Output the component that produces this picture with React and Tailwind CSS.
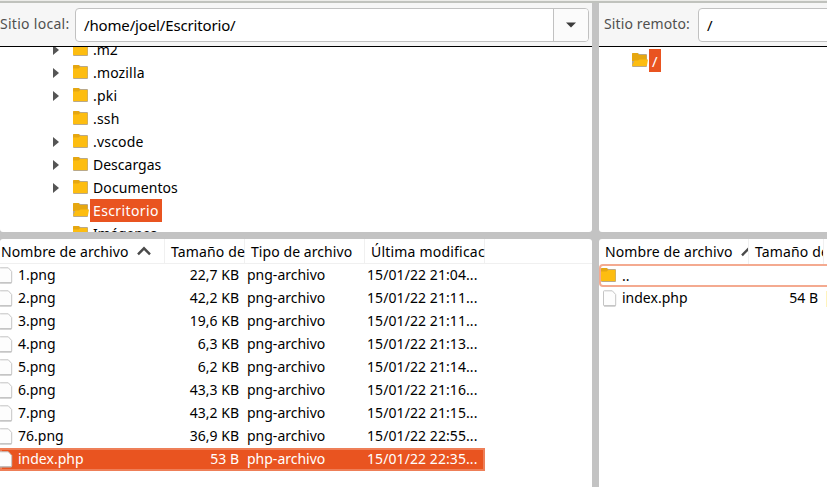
import React from "react";

const tree = [
  { name: ".m2", arrow: true },
  { name: ".mozilla", arrow: true, track: "tracking-[0.15px]" },
  { name: ".pki", arrow: true, track: "tracking-[0.2px]" },
  { name: ".ssh", track: "tracking-[0.2px]" },
  { name: ".vscode", arrow: true, track: "tracking-[0.2px]" },
  { name: "Descargas", arrow: true },
  { name: "Documentos", arrow: true, track: "tracking-[0.1px]" },
  { name: "Escritorio", open: true, track: "tracking-[0.38px]" },
  { name: "Imágenes", track: "tracking-[-0.2px]" },
];

const files = [
  ["1.png", "22,7 KB", "png-archivo", "15/01/22 21:04..."],
  ["2.png", "42,2 KB", "png-archivo", "15/01/22 21:11..."],
  ["3.png", "19,6 KB", "png-archivo", "15/01/22 21:11..."],
  ["4.png", "6,3 KB", "png-archivo", "15/01/22 21:13..."],
  ["5.png", "6,2 KB", "png-archivo", "15/01/22 21:14..."],
  ["6.png", "43,3 KB", "png-archivo", "15/01/22 21:16..."],
  ["7.png", "43,2 KB", "png-archivo", "15/01/22 21:15..."],
  ["76.png", "36,9 KB", "png-archivo", "15/01/22 22:55..."],
  ["index.php", "53 B", "php-archivo", "15/01/22 22:35..."],
];

function Folder({ open }) {
  return (
    <svg width="17" height="16" viewBox="0 0 17 16" className="mb-[2px] shrink-0">
      <path d="M0 14V2.2Q0 1 1.2 1H5.5L7.5 2H14Q15 2 15 3V14Q15 15 14 15H1Q0 15 0 14Z" fill="#b9a98a" />
      {open ? (
        <>
          <path d="M0 13.5V2Q0 1 1 1H5.5L7 3H14.4V9H0Z" fill="#e6a710" />
          <path d="M0 13.7L2.5 8.5H6L7.5 7.5H16L15 13.2Q14.8 14 14 14H.6Z" fill="#fdbd10" />
        </>
      ) : (
        <>
          <path d="M0 5V2Q0 1 1 1H5.5L7.3 2.8L6 5Z" fill="#e6a710" />
          <path d="M0 4.5H5.5L7.5 3H14.4V14H0Z" fill="#fdbd10" />
        </>
      )}
    </svg>
  );
}

function Page() {
  return (
    <svg width="14" height="17" viewBox="0 0 14 17" className="shrink-0">
      <path d="M.5 1.5Q.5 .8 1.2 .8H9.3L12.7 4.5V15Q12.7 15.8 12 15.8H1.5Q.5 15.8 .5 15Z" fill="#fdfdfd" stroke="#c4c4c4" />
      <path d="M1 16H12.5" stroke="#aaa" strokeWidth=".7" />
    </svg>
  );
}

function SortArrow() {
  return (
    <svg width="14" height="10" viewBox="0 0 14 10" className="shrink-0">
      <path d="M1 8.3L7 2.3L13 8.3" fill="none" stroke="#4a4a4a" strokeWidth="2.4" />
    </svg>
  );
}

function TreeRow({ name, arrow, open, track = "" }) {
  return (
    <div className="flex h-[23px] items-center pl-[53px]">
      <div className="w-5">
        {arrow && (
          <svg width="6" height="10" viewBox="0 0 6 10">
            <path d="M0 0L6 5L0 10Z" fill="#555" />
          </svg>
        )}
      </div>
      <Folder open={open} />
      <span className={`h-[23px] pr-[3px] pl-[3px] leading-[23px] ${track} ${open ? "bg-[#e95420] text-white" : ""}`}>
        {name}
      </span>
    </div>
  );
}

export default function App() {
  return (
    <div className="flex h-[487px] w-[827px] flex-col overflow-hidden bg-white font-['Noto_Sans',sans-serif] text-[14px] whitespace-nowrap text-black">
      <div className="h-[3px] shrink-0 border-b-2 border-[#c0c2bd] bg-[#ecece9]" />
      <div className="flex min-h-0 flex-1 bg-[#c3c3c3]">
        <div className="flex w-[592px] shrink-0 flex-col">
          <div className="h-[229px] shrink-0 overflow-hidden rounded-b-[3px] bg-white">
            <div className="flex h-[44px] items-center border-b border-black bg-[#f6f6f6]">
              <span className="w-[75px] pb-[2px] tracking-[0.28px] text-[#50504e]">Sitio local:</span>
              <div className="flex h-[34px] w-[514px] overflow-hidden rounded-[4px] border border-[#c1c1c1] bg-white">
                <span className="w-[478px] border-r border-[#c1c1c1] pl-2 text-[15px] leading-[32px] tracking-[-0.15px]">/home/joel/Escritorio/</span>
                <div className="flex flex-1 items-center justify-center bg-[#fbfbfb]">
                  <svg width="10" height="6" viewBox="0 0 10 6"><path d="M0 .5H10L5 5.5Z" fill="#3c3c3c" /></svg>
                </div>
              </div>
            </div>
            <div className="h-[185px] overflow-hidden">
              <div className="-mt-[9px]">
                {tree.map((t) => <TreeRow key={t.name} {...t} />)}
              </div>
            </div>
          </div>
          <div className="h-[7px] shrink-0" />
          <div className="flex-1 rounded-t-[3px] bg-white">
            <div className="flex h-[25px] border-b border-[#f0f0f0] leading-[25px]">
              <div className="flex w-[165px] items-center gap-2 border-r border-[#f0f0f0] pl-px">
                <span className="tracking-[0.1px]">Nombre de archivo</span><SortArrow />
              </div>
              <div className="w-[80px] border-r border-[#f0f0f0] pl-[6px] tracking-[0.15px]">Tamaño de</div>
              <div className="w-[120px] border-r border-[#f0f0f0] pl-[6px] tracking-[0.07px]">Tipo de archivo</div>
              <div className="w-[120px] border-r border-[#f0f0f0] pl-[6px] tracking-[0.2px]">Última modificac</div>
            </div>
            {files.map(([name, size, type, date]) => {
              const sel = name === "index.php";
              return (
                <div key={name} className={`flex h-[23px] w-[485px] items-center ${sel ? "bg-[#e95420] text-white shadow-[inset_0_0_0_2px_#ee7f58]" : ""}`}>
                  <div className="flex w-[160px] items-center gap-[5px]">
                    <div className="-ml-[1px] flex"><Page /></div><span className="leading-[19px] pb-[2px]">{name}</span>
                  </div>
                  <span className="w-[79px] pb-[2px] text-right leading-[19px]">{size}</span>
                  <span className="w-[128px] pb-[2px] pl-2 leading-[19px]">{type}</span>
                  <span className="pb-[2px] leading-[19px] tracking-[0.08px]">{date}</span>
                </div>
              );
            })}
          </div>
        </div>
        <div className="w-[7px] shrink-0" />
        <div className="flex w-[228px] flex-col overflow-hidden">
          <div className="h-[229px] shrink-0 overflow-hidden rounded-bl-[3px] bg-white">
            <div className="flex h-[44px] items-center border-b border-black bg-[#f6f6f6] pl-[5px]">
              <span className="w-[94px] shrink-0 pb-[2px] tracking-[0.12px] text-[#50504e]">Sitio remoto:</span>
              <div className="h-[34px] w-[200px] shrink-0 rounded-[4px] border border-[#c1c1c1] bg-white pl-2 text-[15px] leading-[32px]">/</div>
            </div>
            <div className="flex items-center pt-[2px] pl-[33px]">
              <Folder open />
              <span className="h-[23px] w-3 bg-[#e95420] pl-[3px] text-[15px] leading-[24px] text-white">/</span>
            </div>
          </div>
          <div className="h-[7px] shrink-0" />
          <div className="flex-1 overflow-hidden rounded-tl-[3px] bg-white">
            <div className="flex h-[25px] leading-[25px]">
              <div className="flex w-[150px] items-center gap-2 overflow-hidden border-r border-[#f0f0f0] pl-[6px]">
                <span className="shrink-0 tracking-[0.1px]">Nombre de archivo</span><SortArrow />
              </div>
              <div className="w-[75px] overflow-hidden border-r border-[#f0f0f0] pl-[6px] tracking-[0.15px]">Tamaño de</div>
            </div>
            <div className="flex h-[23px] w-[240px] items-center rounded-[4px] border-2 border-[#f4aa90] leading-[19px]">
              <Folder /><span className="pl-1">..</span>
            </div>
            <div className="flex h-[23px] items-center">
              <div className="flex w-[140px] items-center gap-[5px] pl-1"><Page /><span className="pb-[2px] leading-[19px]">index.php</span></div>
              <span className="w-[79px] pb-[2px] text-right leading-[19px]">54 B</span>
              <div className="ml-auto h-4 w-px bg-[#fff3bd]" />
            </div>
          </div>
        </div>
      </div>
    </div>
  );
}
